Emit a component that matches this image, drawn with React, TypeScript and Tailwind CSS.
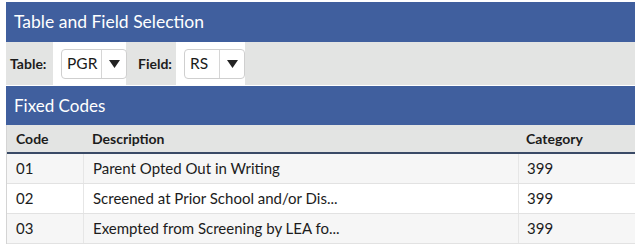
import React from "react";

function Select({ value, textW }: { value: string; textW: number }) {
  return (
    <div className="flex h-[30px] rounded-[4px] border border-[#cfcfcf] bg-white">
      <div
        className="flex items-center pl-[5px] text-[15.5px] text-[#1a1a1a]"
        style={{ width: textW }}
      >
        {value}
      </div>
      <div className="flex w-[25px] items-center justify-center border-l border-[#d6d6d6]">
        <svg width="11" height="8" viewBox="0 0 11 8">
          <polygon points="0,0 11,0 5.5,8" fill="#222" />
        </svg>
      </div>
    </div>
  );
}

const rows = [
  { code: "01", desc: "Parent Opted Out in Writing", cat: "399" },
  { code: "02", desc: "Screened at Prior School and/or Dis...", cat: "399" },
  { code: "03", desc: "Exempted from Screening by LEA fo...", cat: "399" },
];

export default function App() {
  return (
    <div className="min-h-[248px] w-[635px] bg-white pl-[6px] pt-[2px] font-['Lato',sans-serif] text-[#1c1c1c]">
      <div className="flex h-[40px] items-center bg-[#405f9e] pl-[8px] text-[17.5px] text-white">
        Table and Field Selection
      </div>
      <div className="flex h-[43px] bg-[#e3e4e3]">
        <div className="flex w-[47px] items-center pl-[4px] text-[14px] font-bold">Table:</div>
        <div className="flex w-[73px] items-center bg-white pl-[8px]">
          <Select value="PGR" textW={39} />
        </div>
        <div className="flex w-[50px] items-center pl-[12px] text-[14px] font-bold">Field:</div>
        <div className="flex w-[69px] items-center bg-white pl-[8px]">
          <Select value="RS" textW={34} />
        </div>
      </div>
      <div className="h-px bg-white" />
      <div className="flex h-[39px] items-center bg-[#405f9e] pl-[8px] text-[17px] text-white">
        Fixed Codes
      </div>
      <div className="border-l border-[#d4d4d4]">
        <div className="flex h-[29px] items-center border-b-2 border-[#3a4a66] bg-[#e3e4e3] text-[14px] font-bold">
          <div className="w-[76px] pl-[9px]">Code</div>
          <div className="w-[435px] pl-[9px]">Description</div>
          <div className="flex-1 pl-[8px]">Category</div>
        </div>
        {rows.map((r, i) => (
          <div
            key={r.code}
            className={`flex h-[30px] border-b border-[#e2e2e2] text-[15px] ${
              i % 2 === 0 ? "bg-[#f6f6f6]" : "bg-white"
            }`}
          >
            <div className="flex w-[76px] items-center pl-[9px]">{r.code}</div>
            <div className="flex w-[435px] items-center border-l border-[#e6e6e6] pl-[9px]">{r.desc}</div>
            <div className="flex flex-1 items-center border-l border-[#e6e6e6] pl-[8px]">{r.cat}</div>
          </div>
        ))}
      </div>
    </div>
  );
}
